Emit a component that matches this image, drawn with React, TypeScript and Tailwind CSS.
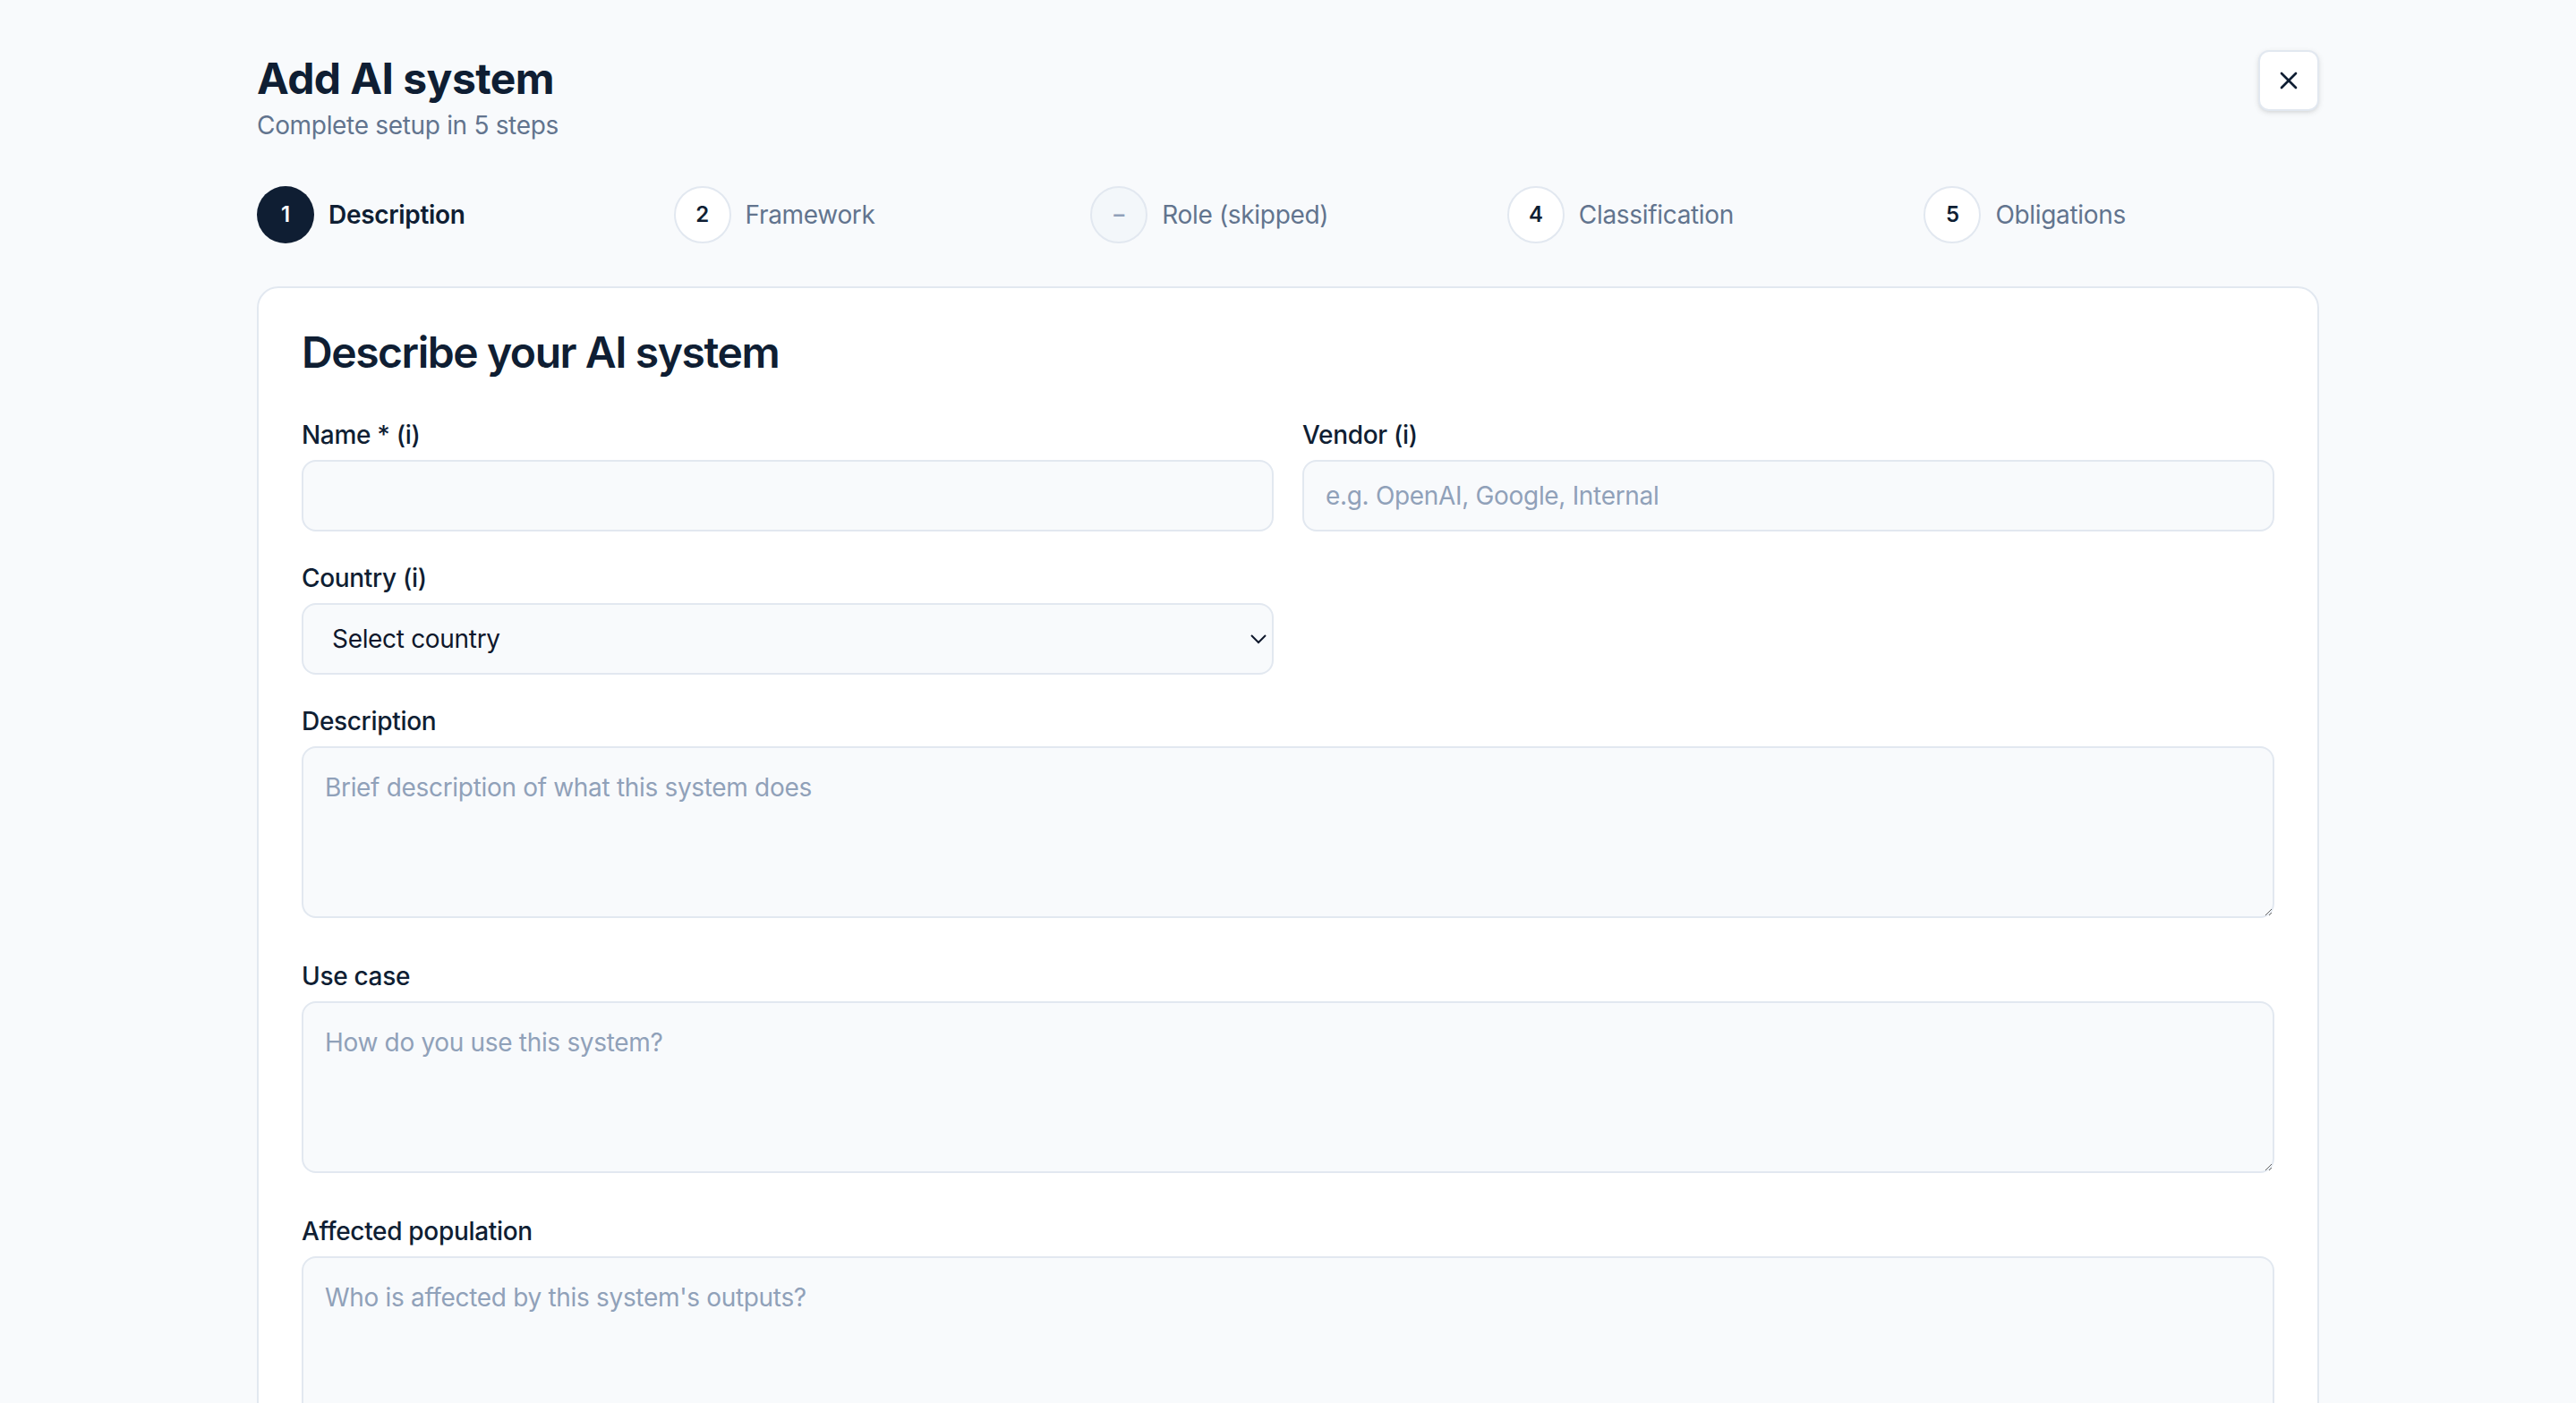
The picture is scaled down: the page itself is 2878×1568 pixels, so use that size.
import React from 'react';
import { X } from 'lucide-react';

type StepState = 'active' | 'todo' | 'skipped';

interface Step {
    label: string;
    marker: string;
    state: StepState;
}

const steps: Step[] = [
    { label: 'Description', marker: '1', state: 'active' },
    { label: 'Framework', marker: '2', state: 'todo' },
    { label: 'Role (skipped)', marker: '–', state: 'skipped' },
    { label: 'Classification', marker: '4', state: 'todo' },
    { label: 'Obligations', marker: '5', state: 'todo' },
];

const inputClass =
    'w-full h-10 rounded-lg border border-slate-200 bg-slate-50 px-3 text-sm text-slate-900 placeholder:text-slate-400 outline-none';

const textareaClass =
    'w-full h-24 rounded-lg border border-slate-200 bg-slate-50 px-3 py-3 text-sm text-slate-900 placeholder:text-slate-400 outline-none';

const StepMarker: React.FC<{ step: Step }> = ({ step }) => {
    if (step.state === 'active') {
        return (
            <span className="flex h-8 w-8 shrink-0 items-center justify-center rounded-full bg-[#0f1e33] text-xs font-semibold text-white">
                {step.marker}
            </span>
        );
    }
    if (step.state === 'skipped') {
        return (
            <span className="flex h-8 w-8 shrink-0 items-center justify-center rounded-full border border-slate-200 bg-slate-100/70 text-xs font-semibold text-slate-400">
                {step.marker}
            </span>
        );
    }
    return (
        <span className="flex h-8 w-8 shrink-0 items-center justify-center rounded-full border border-slate-200 bg-white text-xs font-semibold text-[#0f1e33]">
            {step.marker}
        </span>
    );
};

const Field: React.FC<{ label: string; children: React.ReactNode }> = ({ label, children }) => (
    <div>
        <label className="mb-1 block text-sm font-medium text-[#0f1e33]">{label}</label>
        {children}
    </div>
);

export default function App() {
    return (
        <div className="min-h-screen bg-slate-50 font-['Inter',sans-serif] tracking-[-0.01em]">
            {/* the reference was taken at 2x, so the whole page is zoomed */}
            <div className="[zoom:2]">
                <div className="mx-auto max-w-6xl pt-7 pb-10">
                    <div className="flex items-start justify-between">
                        <div>
                            <h1 className="text-2xl font-bold tracking-[-0.012em] text-[#0f1e33]">Add AI system</h1>
                            <p className="text-sm text-slate-500">Complete setup in 5 steps</p>
                        </div>
                        <button className="flex h-[34px] w-[34px] items-center justify-center rounded-md border border-slate-200 bg-white text-[#0f1e33] shadow-sm">
                            <X size={16} strokeWidth={2} />
                        </button>
                    </div>

                    <div className="mt-6 grid grid-cols-5 gap-3">
                        {steps.map(step => (
                            <div key={step.label} className="flex items-center gap-2">
                                <StepMarker step={step} />
                                <span
                                    className={
                                        step.state === 'active'
                                            ? 'text-sm font-semibold text-[#0f1e33]'
                                            : 'text-sm text-slate-500'
                                    }
                                >
                                    {step.label}
                                </span>
                            </div>
                        ))}
                    </div>

                    <div className="mt-6 rounded-xl border border-slate-200 bg-white px-6 pt-5 pb-6">
                        <h2 className="mb-5 text-2xl font-semibold tracking-[-0.03em] text-[#0f1e33]">Describe your AI system</h2>
                        <div className="space-y-4">
                            <div className="grid grid-cols-2 gap-4">
                                <Field label="Name * (i)">
                                    <input type="text" className={inputClass} />
                                </Field>
                                <Field label="Vendor (i)">
                                    <input type="text" className={inputClass} placeholder="e.g. OpenAI, Google, Internal" />
                                </Field>
                            </div>
                            <div className="grid grid-cols-2 gap-4">
                                <Field label="Country (i)">
                                    <select className={inputClass} defaultValue="">
                                        <option value="">Select country</option>
                                        <option value="de">Germany</option>
                                        <option value="fr">France</option>
                                        <option value="nl">Netherlands</option>
                                    </select>
                                </Field>
                            </div>
                            <Field label="Description">
                                <textarea className={textareaClass} placeholder="Brief description of what this system does" />
                            </Field>
                            <Field label="Use case">
                                <textarea className={textareaClass} placeholder="How do you use this system?" />
                            </Field>
                            <Field label="Affected population">
                                <textarea className={textareaClass} placeholder="Who is affected by this system's outputs?" />
                            </Field>
                        </div>
                    </div>
                </div>
            </div>
        </div>
    );
}
